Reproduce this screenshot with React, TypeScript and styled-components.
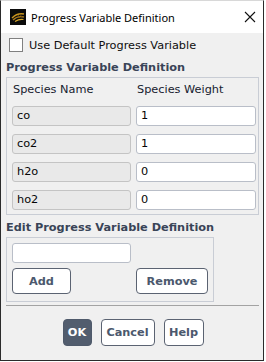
import * as React from "react"
import styled, { createGlobalStyle } from "styled-components"

const GlobalStyle = createGlobalStyle`
html, body {
    margin: 0;
    padding: 0;
    background: #ffffff;
}
`

const Window = styled("div")`
box-sizing: border-box;
width: 264px;
height: 361px;
border: 1px solid #2b2b2b;
border-top-color: #d8d8d8;
background: #f0f0f0;
display: flex;
flex-direction: column;
font-family: "DejaVu Sans", Verdana, sans-serif;
font-size: 11.3px;
color: #111722;
`

const TitleBar = styled("div")`
height: 32px;
background: #ffffff;
display: flex;
align-items: center;
padding: 0 7px 0 9px;
flex-shrink: 0;
`

const TitleText = styled("span")`
flex-grow: 1;
margin-left: 5px;
font-family: "Noto Sans", "Open Sans", sans-serif;
font-size: 11px;
color: #000;
`

const Body = styled("div")`
display: flex;
flex-direction: column;
padding: 0 4px 0 5px;
`

const CheckRow = styled("label")`
display: flex;
align-items: center;
gap: 6px;
margin: 5px 0 0 3px;
height: 14px;
color: #0e0e0e;
`

const CheckBox = styled("span")`
box-sizing: border-box;
width: 14px;
height: 14px;
border: 1px solid #808080;
background: #fff;
`

const SectionTitle = styled("div")<{ $top: number }>`
height: 16px;
line-height: 16px;
margin-top: ${p => p.$top}px;
margin-bottom: 1px;
font-weight: bold;
color: #394457;
`

const Group = styled("div")<{ $width?: number }>`
box-sizing: border-box;
border: 1px solid #c9cdd5;
width: ${p => p.$width ? `${p.$width}px` : "auto"};
`

const SpeciesGrid = styled("div")`
display: grid;
grid-template-columns: 119px 120px;
column-gap: 5px;
row-gap: 8px;
padding: 3px 4px 4px 5px;
`

const ColHead = styled("div")`
height: 17px;
line-height: 17px;
padding-left: 1px;
color: #16202f;
`

const Field = styled("div")<{ $readOnly?: boolean }>`
box-sizing: border-box;
height: 20px;
line-height: 18px;
padding: 0 4px;
border: 1px solid ${p => p.$readOnly ? "#c4c4c4" : "#b9bec8"};
border-radius: 3px;
background: ${p => p.$readOnly ? "#e9e9e9" : "#ffffff"};
color: #050505;
`

const EditBody = styled("div")`
display: flex;
flex-direction: column;
padding: 5px 5px 7px 5px;
`

const EditField = styled(Field)`
width: 119px;
`

const EditButtons = styled("div")`
display: flex;
justify-content: space-between;
margin-top: 5px;
`

const Button = styled("button")<{ $width: number; $primary?: boolean }>`
box-sizing: border-box;
width: ${p => p.$width}px;
height: 26px;
padding: 0;
border: 1px solid ${p => p.$primary ? "#4f5a6b" : "#5b6372"};
border-radius: 4px;
background: ${p => p.$primary ? "#525d6e" : "#ffffff"};
color: ${p => p.$primary ? "#ffffff" : "#4b586d"};
font-family: "DejaVu Sans", Verdana, sans-serif;
font-size: 11.3px;
font-weight: bold;
`

const Separator = styled("div")`
height: 1px;
background: #a3a3a3;
margin: 3px 0 0 0;
`

const Footer = styled("div")`
display: flex;
justify-content: center;
gap: 9px;
margin-top: 13px;
padding-left: 1px;
`

const FooterButton = styled(Button)`
height: 27px;
`

const AppIcon = () => (
    <svg width="16" height="16" viewBox="0 0 16 16">
        <rect width="16" height="16" fill="#0b0b0b" />
        <path d="M2 9 C5 6 9 4 14 5" stroke="#c9951e" strokeWidth="1.4" fill="none" />
        <path d="M3 11 C6 8 10 7 14 8" stroke="#a9781a" strokeWidth="1.4" fill="none" />
        <path d="M5 12.5 C8 10.5 11 10 13.5 10.5" stroke="#d8a72a" strokeWidth="1.2" fill="none" />
        <path d="M8 6 L10 9 M10 5 L12 8.5" stroke="#7a5612" strokeWidth="0.8" />
    </svg>
)

const CloseIcon = () => (
    <svg width="12" height="12" viewBox="0 0 12 12">
        <path d="M1 1 L11 11 M11 1 L1 11" stroke="#111" strokeWidth="1.1" />
    </svg>
)

const species = [
    { name: "co", weight: "1" },
    { name: "co2", weight: "1" },
    { name: "h2o", weight: "0" },
    { name: "ho2", weight: "0" },
]

export default function App() {
    return <>
        <GlobalStyle />
        <Window>
            <TitleBar>
                <AppIcon />
                <TitleText>Progress Variable Definition</TitleText>
                <CloseIcon />
            </TitleBar>
            <Body>
                <CheckRow>
                    <CheckBox />
                    Use Default Progress Variable
                </CheckRow>
                <SectionTitle $top={8}>Progress Variable Definition</SectionTitle>
                <Group>
                    <SpeciesGrid>
                        <ColHead>Species Name</ColHead>
                        <ColHead>Species Weight</ColHead>
                        {species.map(s => <React.Fragment key={s.name}>
                            <Field $readOnly>{s.name}</Field>
                            <Field>{s.weight}</Field>
                        </React.Fragment>)}
                    </SpeciesGrid>
                </Group>
                <SectionTitle $top={5}>Edit Progress Variable Definition</SectionTitle>
                <Group $width={208}>
                    <EditBody>
                        <EditField />
                        <EditButtons>
                            <Button $width={59}>Add</Button>
                            <Button $width={72}>Remove</Button>
                        </EditButtons>
                    </EditBody>
                </Group>
                <Separator />
                <Footer>
                    <FooterButton $width={29} $primary>OK</FooterButton>
                    <FooterButton $width={54}>Cancel</FooterButton>
                    <FooterButton $width={40}>Help</FooterButton>
                </Footer>
            </Body>
        </Window>
    </>
}
